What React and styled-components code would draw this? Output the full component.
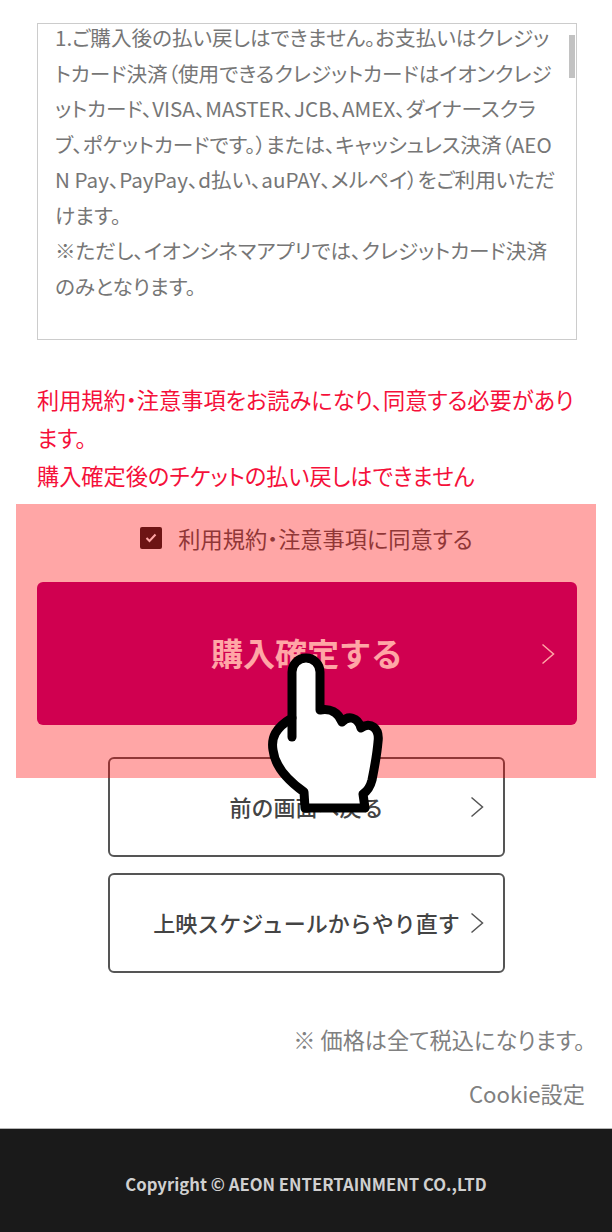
import React from "react"
import styled, { createGlobalStyle } from "styled-components"

const GlobalStyle = createGlobalStyle`
    html, body {
        margin: 0;
        padding: 0;
        background: #fff;
    }
    body {
        font-family: "Noto Sans CJK JP", "Noto Sans", sans-serif;
        font-feature-settings: "palt";
        overflow: hidden;
    }
`

const Page = styled.div`
    position: relative;
    width: 612px;
    height: 1232px;
    overflow: hidden;
    display: flex;
    flex-direction: column;
`

const TermsBox = styled.div`
    position: relative;
    box-sizing: border-box;
    width: 540px;
    height: 317px;
    margin: 23px 0 0 37px;
    padding: 0 17px 0 17px;
    border: 1px solid #ccc;
    overflow: hidden;
    color: #767676;
    font-size: 20.6px;
    line-height: 35.5px;
    word-break: break-all;
`

const TermsText = styled.div`
    margin-top: -4px;
`

const ScrollThumb = styled.div`
    position: absolute;
    top: 11px;
    right: 1px;
    width: 6px;
    height: 43px;
    background: #c2c2c2;
`

const Warning = styled.p`
    margin: 40px 37px 0;
    color: #f5103a;
    font-size: 22.2px;
    line-height: 38px;
`

const AgreeRow = styled.label`
    display: flex;
    align-items: center;
    justify-content: center;
    gap: 16px;
    margin-top: 26px;
    height: 36px;
    padding-left: 1px;
    color: #555;
    font-size: 22.2px;
`

const CheckBox = styled.span`
    width: 22px;
    height: 22px;
    border-radius: 2px;
    background: #202020;
    display: flex;
    align-items: center;
    justify-content: center;
`

const ConfirmButton = styled.div`
    box-sizing: border-box;
    display: flex;
    align-items: center;
    justify-content: center;
    position: relative;
    width: 540px;
    height: 143px;
    margin: 26px 0 0 37px;
    padding-bottom: 4px;
    border-radius: 6px;
    background: #b7007b;
    color: #fff;
    font-size: 32px;
    font-weight: 700;
    font-feature-settings: normal;
`

const OutlineButton = styled.div`
    box-sizing: border-box;
    display: flex;
    align-items: center;
    justify-content: center;
    position: relative;
    width: 397px;
    height: 100px;
    margin: ${props => props.$gap}px 0 0 108px;
    padding-bottom: 2px;
    border: 2px solid #555;
    border-radius: 6px;
    background: #fff;
    color: #444;
    font-size: 22px;
    font-weight: 500;
    font-feature-settings: normal;
`

const Chevron = styled.svg`
    position: absolute;
    right: ${props => props.$right}px;
    top: 50%;
    transform: translateY(-50%);
    width: 14px;
    height: 22px;
    fill: none;
    stroke: ${props => props.$color};
    stroke-width: 1.5;
`

const SideNote = styled.p`
    margin: ${props => props.$top}px 27px 0 0;
    color: #808080;
    font-size: 22.2px;
    line-height: 30px;
    text-align: right;
`

const Footer = styled.footer`
    margin-top: auto;
    box-sizing: border-box;
    height: 104px;
    padding-top: 6px;
    border-top: 1px solid #b5b5b5;
    background: #1a1a1a;
    color: #d0d0d0;
    display: flex;
    align-items: center;
    justify-content: center;
    font-size: 16.7px;
    font-weight: 700;
`

// translucent red block laid over the agree row and the confirm button
const Highlight = styled.div`
    position: absolute;
    left: 16px;
    top: 504px;
    width: 580px;
    height: 274px;
    background: rgba(255, 0, 0, 0.35);
`

const HandPointer = styled.svg`
    position: absolute;
    left: 200px;
    top: 620px;
    width: 240px;
    height: 210px;
`

const ChevronIcon = ({color, right}) => (
    <Chevron $color={color} $right={right} viewBox="0 0 14 22">
        <path d="M1.5 1.5 L12.5 11 L1.5 20.5" />
    </Chevron>
)

const App = () => (
    <Page>
        <GlobalStyle />
        <TermsBox>
            <TermsText>
                1.ご購入後の払い戻しはできません。お支払いはクレジットカード決済（使用できるクレジットカードはイオンクレジットカード、VISA、MASTER、JCB、AMEX、ダイナースクラブ、ポケットカードです。）または、キャッシュレス決済（AEON Pay、PayPay、d払い、auPAY、メルペイ）をご利用いただけます。
                <br />
                ※ただし、イオンシネマアプリでは、クレジットカード決済のみとなります。
            </TermsText>
            <ScrollThumb />
        </TermsBox>
        <Warning>
            利用規約・注意事項をお読みになり、同意する必要があります。
            <br />
            購入確定後のチケットの払い戻しはできません
        </Warning>
        <AgreeRow>
            <CheckBox>
                <svg width="12" height="10" viewBox="0 0 12 10" fill="none" stroke="#fff" strokeWidth="2">
                    <path d="M1.5 5 L4.5 8 L10.5 1.5" />
                </svg>
            </CheckBox>
            利用規約・注意事項に同意する
        </AgreeRow>
        <ConfirmButton>
            購入確定する
            <ChevronIcon color="#fff" right={22} />
        </ConfirmButton>
        <OutlineButton $gap={32}>
            前の画面へ戻る
            <ChevronIcon color="#555" right={19} />
        </OutlineButton>
        <OutlineButton $gap={16}>
            上映スケジュールからやり直す
            <ChevronIcon color="#555" right={19} />
        </OutlineButton>
        <SideNote $top={51}>※ 価格は全て税込になります。</SideNote>
        <SideNote $top={24}>Cookie設定</SideNote>
        <Footer>Copyright © AEON ENTERTAINMENT CO.,LTD</Footer>
        <Highlight />
        <HandPointer viewBox="0 0 240 210">
            <path
                d="M92 98 L92 52 A14 14 0 0 1 120 52 L120 90 C130 88 138 92 142 102 C148 95 158 97 161 108 C170 101 180 108 178 122 C177 134 174 150 172 160 C170 168 166 172 163 174 L165 188 L105 188 L104 172 C90 162 75 148 73 130 C71 118 75 108 92 98 Z"
                fill="#fff"
                stroke="#000"
                strokeWidth="9"
                strokeLinejoin="round"
            />
            <path d="M92 98 L92 117" fill="none" stroke="#000" strokeWidth="9" strokeLinecap="round" />
        </HandPointer>
    </Page>
)

export default App
